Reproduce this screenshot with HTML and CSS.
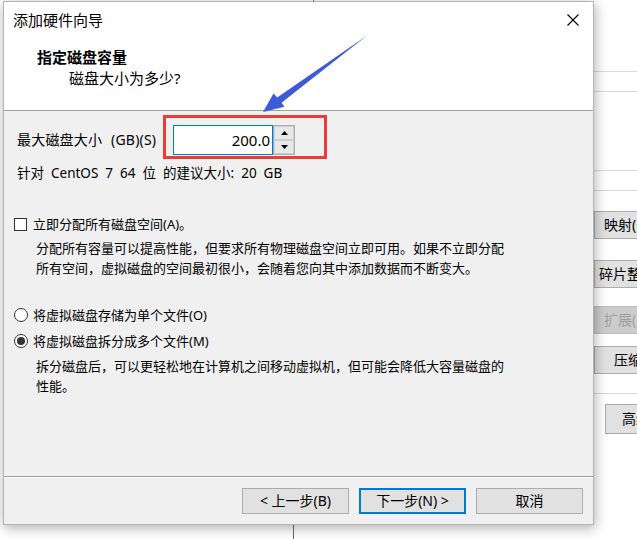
FILE: index.html
```html
<!DOCTYPE html>
<html lang="zh-CN">
<head>
<meta charset="utf-8">
<title>添加硬件向导</title>
<link rel="stylesheet" href="styles.css">
</head>
<body>
<div class="desk">
  <div class="bg-vline vl-top"></div>
  <div class="bg-vline vl-bottom"></div>
  <div class="bg-hline" style="top:71px"></div>
  <div class="bg-hline" style="top:91px"></div>
  <div class="bg-hline" style="top:170px"></div>
  <div class="bg-hline" style="top:190px"></div>
  <div class="bg-hline" style="top:393px"></div>
  <div class="bg-btn b-map">映射(M)</div>
  <div class="bg-btn b-defrag">碎片整理(D)</div>
  <div class="bg-btn b-expand disabled">扩展(E)</div>
  <div class="bg-btn b-compact">压缩(C)</div>
  <div class="bg-btn b-adv">高级(V)...</div>

  <div class="dialog">
    <div class="titlebar">
      <span class="title">添加硬件向导</span>
      <svg class="close" width="12" height="12" viewBox="0 0 12 12"><path d="M0.5 0.5L11.5 11.5M11.5 0.5L0.5 11.5" stroke="#000" stroke-width="1.1" fill="none"/></svg>
    </div>
    <div class="header">
      <div class="heading">指定磁盘容量</div>
      <div class="subtitle">磁盘大小为多少?</div>
    </div>
    <div class="content">
      <div class="size-row">
        <span class="size-label">最大磁盘大小 (GB)(S)</span>
        <div class="spin-field">
          <div class="spin-input">200.0</div>
          <div class="spinner">
            <div class="spin-btn"><svg width="7" height="4" viewBox="0 0 7 4"><path d="M3.5 0L7 4H0Z" fill="#000"/></svg></div>
            <div class="spin-btn"><svg width="7" height="4" viewBox="0 0 7 4"><path d="M0 0H7L3.5 4Z" fill="#000"/></svg></div>
          </div>
        </div>
      </div>
      <div class="recommend">针对 CentOS 7 64 位 的建议大小: 20 GB</div>

      <div class="option check-row">
        <span class="checkbox"></span>
        <span>立即分配所有磁盘空间(A)。</span>
      </div>
      <div class="desc desc-check">分配所有容量可以提高性能，但要求所有物理磁盘空间立即可用。如果不立即分配<br>所有空间，虚拟磁盘的空间最初很小，会随着您向其中添加数据而不断变大。</div>

      <div class="option radio-row r1">
        <span class="radio"></span>
        <span>将虚拟磁盘存储为单个文件(O)</span>
      </div>
      <div class="option radio-row r2">
        <span class="radio checked"></span>
        <span>将虚拟磁盘拆分成多个文件(M)</span>
      </div>
      <div class="desc desc-radio">拆分磁盘后，可以更轻松地在计算机之间移动虚拟机，但可能会降低大容量磁盘的<br>性能。</div>
    </div>
    <div class="footer">
      <div class="btn">&lt; 上一步(B)</div>
      <div class="btn default">下一步(N) &gt;</div>
      <div class="btn">取消</div>
    </div>
  </div>

  <svg class="arrow" width="637" height="539" viewBox="0 0 637 539">
    <polygon points="263,112 273.5,93.5 277.2,97.4 367,35.5 281.5,102.7 284.5,106.8" fill="#3b5bd8"/>
  </svg>
</div>
</body>
</html>
```
FILE: styles.css
```css
* { box-sizing: border-box; }

body {
  margin: 0;
  width: 637px;
  height: 539px;
  overflow: hidden;
  background: #ffffff;
  font-family: "Noto Sans", "Noto Sans CJK SC", sans-serif;
  color: #000;
}

.desk {
  position: relative;
  width: 637px;
  height: 539px;
  overflow: hidden;
}

/* background application window pieces */
.bg-vline {
  position: absolute;
  width: 1px;
  background: #6e6e6e;
}
.vl-top { left: 313px; top: 0; height: 10px; }
.vl-bottom { left: 293px; top: 500px; height: 39px; }

.bg-hline {
  position: absolute;
  left: 594px;
  width: 43px;
  height: 1px;
  background: #d9d9d9;
}

.bg-btn {
  position: absolute;
  left: 594px;
  width: 90px;
  height: 28px;
  border: 1px solid #adadad;
  background: #e1e1e1;
  font-size: 14px;
  line-height: 26px;
  white-space: nowrap;
}
.b-map { top: 211px; padding-left: 9px; }
.b-defrag { top: 260px; padding-left: 4px; }
.b-expand { top: 306px; padding-left: 9px; }
.b-compact { top: 346px; padding-left: 19px; }
.b-adv { top: 404px; left: 605px; height: 30px; line-height: 28px; padding-left: 16px; }
.bg-btn.disabled {
  background: #cccccc;
  border-color: #bfbfbf;
  color: #a0a0a0;
}

/* dialog window */
.dialog {
  position: absolute;
  left: 3px;
  top: 1px;
  width: 591px;
  height: 524px;
  border: 1px solid #b4b4b4;
  background: #f0f0f0;
  display: flex;
  flex-direction: column;
  box-shadow: 1px 3px 12px rgba(0, 0, 0, 0.32);
  z-index: 2;
}

.titlebar {
  height: 36px;
  background: #fff;
  display: flex;
  align-items: center;
  justify-content: space-between;
  padding: 0 14px 0 9px;
}
.title {
  font-size: 15px;
  line-height: 20px;
}
.close { display: block; }

.header {
  height: 73px;
  background: #fff;
  border-bottom: 1px solid #a0a0a0;
  padding: 9px 0 0 33px;
}
.heading {
  font-size: 15px;
  font-weight: bold;
  line-height: 20px;
}
.subtitle {
  margin: 1px 0 0 32px;
  font-size: 15px;
  line-height: 20px;
}

.content {
  flex: 1;
  padding-left: 10px;
  font-size: 13px;
}

.size-row {
  margin: 14px 0 0 3px;
  height: 30px;
  display: flex;
  align-items: center;
}
.size-label {
  width: 156px;
  line-height: 20px;
  font-size: 14px;
  letter-spacing: 0.2px;
  word-spacing: 5px;
}
.spin-field {
  position: relative;
  display: flex;
  height: 30px;
}
.spin-field::after {
  content: "";
  position: absolute;
  left: -10px;
  top: -10px;
  right: -32px;
  bottom: -4px;
  border: 3px solid #f03a3a;
}
.spin-input {
  width: 100px;
  height: 30px;
  border: 1px solid #0078d7;
  background: #fff;
  text-align: right;
  padding-right: 2px;
  font-size: 15px;
  line-height: 28px;
}
.spinner {
  width: 22px;
  height: 30px;
  border: 1px solid #adadad;
  display: flex;
  flex-direction: column;
  background: #e6e6e6;
}
.spin-btn {
  flex: 1;
  display: flex;
  align-items: center;
  justify-content: center;
  border: 1px solid #d0d0d0;
  background: #e8e8e8;
}
.spin-btn svg { display: block; }

.recommend {
  margin: 8px 0 0 3px;
  line-height: 20px;
  font-size: 13.5px;
  word-spacing: 3.5px;
}

.option {
  display: flex;
  align-items: center;
  line-height: 20px;
}
.check-row { margin-top: 31px; gap: 6px; }
.checkbox {
  width: 13px;
  height: 13px;
  border: 1px solid #333;
  background: #fff;
}

.desc {
  margin-left: 22px;
  line-height: 20px;
}
.desc-check { margin-top: 4px; }

.radio-row { gap: 5px; }
.r1 { margin-top: 27px; }
.r2 { margin-top: 6px; }
.radio {
  width: 14px;
  height: 14px;
  border: 1px solid #333;
  border-radius: 50%;
  background: #fff;
  display: flex;
  align-items: center;
  justify-content: center;
}
.radio.checked::after {
  content: "";
  width: 8px;
  height: 8px;
  border-radius: 50%;
  background: #333;
}
.desc-radio { margin-top: 5px; }

.footer {
  height: 48px;
  border-top: 1px solid #a0a0a0;
  box-shadow: inset 0 1px 0 #fff;
  display: flex;
  justify-content: flex-end;
  align-items: flex-start;
  gap: 10px;
  padding: 11px 10px 0 0;
}
.btn {
  width: 107px;
  height: 26px;
  border: 1px solid #adadad;
  background: #e1e1e1;
  font-size: 14px;
  line-height: 24px;
  text-align: center;
}
.btn.default {
  border: 2px solid #0078d7;
  line-height: 22px;
}

.arrow {
  position: absolute;
  left: 0;
  top: 0;
  pointer-events: none;
  z-index: 3;
}
```
